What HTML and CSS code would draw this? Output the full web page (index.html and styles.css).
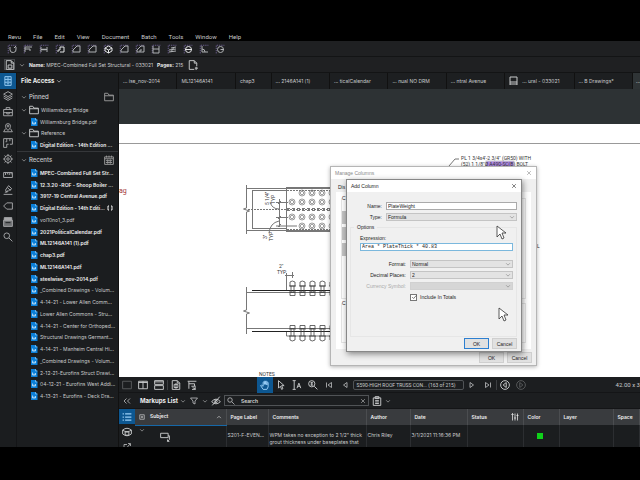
FILE: index.html
```
<!DOCTYPE html>
<html lang="en">
<head>
<meta charset="utf-8">
<title>Revu</title>
<link rel="stylesheet" href="styles.css">
</head>
<body>
<svg class="sprite" aria-hidden="true">
  <symbol id="frame" viewBox="0 0 16 16"><path d="M2 15V2h13" stroke="#75669c" stroke-dasharray="2 1.5" stroke-width="1.4"/></symbol>
  <symbol id="down" viewBox="0 0 16 16"><path d="M3 6l5 5 5-5"/></symbol>
  <symbol id="up" viewBox="0 0 16 16"><path d="M3 11l5-5 5 5"/></symbol>
  <symbol id="close" viewBox="0 0 16 16"><path d="M3 3l10 10M13 3L3 13"/></symbol>
  <symbol id="folder" viewBox="0 0 16 16"><path d="M1 14V2h5l2 3h7v9zM1 6h14"/></symbol>
  <symbol id="calendar" viewBox="0 0 16 16"><path d="M1 3h14v12H1zM1 6h14M4 1v3M8 1v3M12 1v3M3 9h10M3 12h10M6 7v7M10 7v7"/></symbol>
  <symbol id="pdf" viewBox="0 0 16 16"><path d="M2 0h9l4 4v12H2z" fill="#0b7fd8" stroke="none"/><path d="M11 0v4h4" stroke="#bfe0fa"/><path d="M5 7v5h3M8 12V9M11 8v4h-3" stroke="#d8edfc" stroke-width="1.5"/></symbol>
  <symbol id="search" viewBox="0 0 16 16"><circle cx="6" cy="6" r="4.5"/><path d="M9.5 9.5L15 15"/></symbol>
  <symbol id="cabinet" viewBox="0 0 16 16"><path d="M3 1h10v14H3zM3 5.500h10M3 10h10M6 3.300h4M6 8h4M6 12.500h4"/></symbol>
  <symbol id="layers" viewBox="0 0 16 16"><path d="M8 1l7 4-7 4-7-4zM1 8l7 4 7-4M1 11l7 4 7-4"/></symbol>
  <symbol id="case" viewBox="0 0 16 16"><path d="M1 4h14v10H1zM5 4V1h6v3M1 9h14M6 8v3h4V8"/></symbol>
  <symbol id="pin" viewBox="0 0 16 16"><path d="M8 12C4 8 4 6 4 5a4 4 0 018 0c0 1 0 3-4 7z"/><circle cx="8" cy="5" r="1.400"/><path d="M4 9l-3 5h14l-3-5"/></symbol>
  <symbol id="plan" viewBox="0 0 16 16"><path d="M1 1h14v9h-4M1 1v14h5v-5h3M6 1v5H4M11 1v4"/></symbol>
  <symbol id="gear" viewBox="0 0 16 16"><circle cx="8" cy="8" r="5.500"/><circle cx="8" cy="8" r="2"/><path d="M8 0v3M8 13v3M0 8h3M13 8h3M2.500 2.500l2 2M11.500 11.500l2 2M2.500 13.500l2-2M11.500 4.500l2-2"/></symbol>
  <symbol id="ruler" viewBox="0 0 16 16"><path d="M1 4h14v8H1zM4 4v4M7 4v3M10 4v4M13 4v3"/></symbol>
  <symbol id="sign" viewBox="0 0 16 16"><path d="M1 15h14M3 12l5-3M7 4l5 5M9 1l5 5-5 3-3 3-2-4z"/></symbol>
  <symbol id="tag" viewBox="0 0 16 16"><path d="M6 3h9v10H6L1 8z"/></symbol>
  <symbol id="sets" viewBox="0 0 16 16"><path d="M2 1h12v4H2z" fill="currentColor"/><path d="M1 5h14v10H1z" fill="currentColor" fill-opacity=".6"/><path d="M4 9h8" stroke="#1c1f21"/></symbol>
  <symbol id="doc" viewBox="0 0 16 16"><path d="M2 1h8l4 4v10H2zM10 1v4h4M5 8h6v5H5z"/></symbol>
  <symbol id="page" viewBox="0 0 16 16"><path d="M10 15H2V1h8l4 4v5M10 1v4h4M13 11v5M11 13h5"/></symbol>
  <symbol id="one" viewBox="0 0 16 16"><path d="M1 2h14v12H1z"/></symbol>
  <symbol id="cols" viewBox="0 0 16 16"><path d="M1 2h14v12H1zM8 2v12M1 4h14"/></symbol>
  <symbol id="rows" viewBox="0 0 16 16"><path d="M1 1h14v6H1zM1 9h14v6H1zM1 3h14"/></symbol>
  <symbol id="pagefit" viewBox="0 0 16 16"><path d="M2 1h8l4 4v10H2zM10 1v4h4M5 7h6M5 7v5h6V7M8 5v9"/></symbol>
  <symbol id="dims" viewBox="0 0 16 16"><path d="M1 2h14M3 2v12M3 6h9v4H7M9 12l5 3M13 9v6H8"/></symbol>
  <symbol id="hand" viewBox="0 0 16 16"><path d="M5 15L1 9l1-1 3 2V3.500q1-1 2 0V7 2q1-1 2 0v5-4.500q1-1 2 0V8 4q1-1 2 0v7l-2 4z"/></symbol>
  <symbol id="arrow" viewBox="0 0 16 16"><path d="M4 1v12l3-3 2 5 2-1-2-5h4z"/></symbol>
  <symbol id="textsel" viewBox="0 0 16 16"><path d="M1 1h5M3.500 1v14M1 15h5M8 13l3-8 3 8M9 10h4"/></symbol>
  <symbol id="zoomin" viewBox="0 0 16 16"><circle cx="6" cy="6" r="5"/><path d="M10 10l5 5M6 3v6M4 4.500h4M4 8h4"/></symbol>
  <symbol id="first" viewBox="0 0 16 16"><path d="M3 3v10M13 3L6 8l7 5z"/></symbol>
  <symbol id="prev" viewBox="0 0 16 16"><path d="M12 3L5 8l7 5z"/></symbol>
  <symbol id="next" viewBox="0 0 16 16"><path d="M4 3l7 5-7 5z"/></symbol>
  <symbol id="last" viewBox="0 0 16 16"><path d="M13 3v10M3 3l7 5-7 5z"/></symbol>
  <symbol id="back" viewBox="0 0 16 16"><circle cx="8" cy="8" r="7"/><path d="M10 4L5 8l5 4z"/></symbol>
  <symbol id="fwd" viewBox="0 0 16 16"><circle cx="8" cy="8" r="7"/><path d="M6 4l5 4-5 4z"/></symbol>
  <symbol id="collapse" viewBox="0 0 16 16"><path d="M7 3L2 8l5 5M14 3L9 8l5 5"/></symbol>
  <symbol id="funnel" viewBox="0 0 16 16"><path d="M1 2h14l-5 6v6l-4-2V8z"/></symbol>
  <symbol id="hide" viewBox="0 0 16 16"><path d="M1 9q7-8 14 0-7 7-14 0zM14 1L2 15"/><circle cx="8" cy="8.500" r="2"/></symbol>
  <symbol id="clip" viewBox="0 0 16 16"><path d="M2 3h12v12H2zM5 1h6v3H5zM5 7h6M5 9.500h6M5 12h6"/></symbol>
  <symbol id="list" viewBox="0 0 16 16"><path d="M1 3h2M5 3h10M1 8h2M5 8h10M1 13h2M5 13h10" stroke-width="2"/></symbol>
  <symbol id="globe" viewBox="0 0 16 16"><path d="M1 5q7-6 14 0v6q-7 6-14 0zM1 5q7 5 14 0M5 8v5h6V8z"/></symbol>
  <symbol id="export" viewBox="0 0 16 16"><path d="M8 3H2v12h12V9M8 9l6-7M10 1h5v5"/></symbol>
  <symbol id="sliders" viewBox="0 0 16 16"><path d="M3 15V1M1 4l2-3 2 3M8 1v14M6 10h4M13 15V1M11 5h4"/></symbol>
  <symbol id="plusbox" viewBox="0 0 16 16"><path d="M2 2h12v12H2zM8 5v6M5 8h6"/></symbol>
  <symbol id="callout" viewBox="0 0 16 16"><path d="M1 2h12v7H1zM13 6h2v6l-3 3M12 12v3h3"/></symbol>
  <symbol id="tick" viewBox="0 0 16 16"><path d="M3 8l4 4 7-8"/></symbol>
  <symbol id="pointer" viewBox="0 0 10 15"><path d="M1 1v11l3-3 2 5 2-1-2-5h4z" fill="#fff" stroke="#333" stroke-width=".8"/></symbol>
  <symbol id="bolt" viewBox="-4 -4 8 8"><circle r="3"/><circle r="1.700"/></symbol>
</svg>

<nav class="menu" aria-label="Main menu">
  <a href="#">Revu</a><a href="#">File</a><a href="#">Edit</a><a href="#">View</a><a href="#">Document</a><a href="#">Batch</a><a href="#">Tools</a><a href="#">Window</a><a href="#">Help</a>
</nav>

<div class="tools" role="toolbar" aria-label="Measure">
  <button aria-label="Calibrate"><svg class="ico"><use href="#frame"/><path d="M3 3v3a3 3 0 006-1V3M7 4l2-2"/></svg></button>
  <button aria-label="Scale"><svg class="ico"><use href="#frame"/><path d="M2 8V3h7M2 5h5v2"/></svg></button>
  <button aria-label="Length"><svg class="ico"><use href="#frame"/><path d="M2 3v5M8 3v5M2 5.500h6M4 4.500v2M6 4.500v2"/></svg></button>
  <button aria-label="Polylength"><svg class="ico bold"><use href="#frame"/><path d="M3 8V6h2V3h4v5H5"/></svg></button>
  <button aria-label="Area"><svg class="ico"><use href="#frame"/><path d="M2 8V6l4-4h3v6z"/></svg></button>
  <button aria-label="Perimeter"><svg class="ico"><use href="#frame"/><path d="M2 8V6l4-4h3v6z"/></svg></button>
  <button aria-label="Volume"><svg class="ico bold"><use href="#frame"/><path d="M5.500 2L9 4v3L5.500 9 2 7V4zM2 4l3.500 2L9 4M5.500 6v3"/></svg></button>
  <button aria-label="Polygon"><svg class="ico"><use href="#frame"/><path d="M2 8V6l4-4h3v6z"/></svg></button>
  <button aria-label="Cutout"><svg class="ico"><use href="#frame"/><path d="M2 8V6l4-4h3v6zM5 8V6h2"/></svg></button>
  <button aria-label="Width"><svg class="ico"><use href="#frame"/><path d="M2 2v7h6V2M2 5h6"/></svg></button>
  <button aria-label="Slope"><svg class="ico"><use href="#frame"/><path d="M2 8l7-1M2 6l7-1M4 4l5-1M4 8l3-5"/></svg></button>
  <button aria-label="Diameter"><svg class="ico bold"><use href="#frame"/><circle cx="5.500" cy="5.500" r="3"/><path d="M2 5.500h7"/></svg></button>
  <button aria-label="Angle"><svg class="ico"><use href="#frame"/><path d="M3 2v6h6M3 5q3 0 3 3"/></svg></button>
  <button aria-label="Radius"><svg class="ico"><use href="#frame"/><circle cx="5.500" cy="5.500" r="3"/><path d="M5.500 5.500H9"/></svg></button>
</div>

<div class="docbar">
  <button class="doc-button" aria-label="Document"><svg class="ico"><use href="#doc"/></svg></button>
  <svg class="tiny"><use href="#down"/></svg>
  <p><b>Name:</b> MPEC-Combined Full Set Structural - 033021</p>
  <p><b>Pages:</b> 215</p>
  <button class="page-button" aria-label="Page setup"><svg class="ico"><use href="#page"/></svg></button>
</div>

<div class="workspace">
  <nav class="rail" aria-label="Panels">
    <button class="on" aria-label="File Access"><svg class="ico"><use href="#cabinet"/></svg></button>
    <button aria-label="Layers"><svg class="ico"><use href="#layers"/></svg></button>
    <button aria-label="Tool Chest"><svg class="ico"><use href="#case"/></svg></button>
    <button aria-label="Places"><svg class="ico"><use href="#pin"/></svg></button>
    <button aria-label="Spaces"><svg class="ico"><use href="#plan"/></svg></button>
    <button aria-label="Properties"><svg class="ico"><use href="#gear"/></svg></button>
    <button aria-label="Measurements"><svg class="ico"><use href="#ruler"/></svg></button>
    <button aria-label="Signatures"><svg class="ico"><use href="#sign"/></svg></button>
    <button aria-label="Flags"><svg class="ico"><use href="#tag"/></svg></button>
    <button aria-label="Sets"><svg class="ico"><use href="#sets"/></svg></button>
    <button aria-label="Search"><svg class="ico"><use href="#search"/></svg></button>
  </nav>

  <aside class="files">
    <h2>File Access <svg class="tiny"><use href="#down"/></svg></h2>
    <h3><svg class="tiny"><use href="#down"/></svg>Pinned<svg class="ico side"><use href="#folder"/></svg></h3>
    <ul class="pinned">
      <li class="group"><svg class="tiny"><use href="#down"/></svg><svg class="ico"><use href="#folder"/></svg>Williamsburg Bridge</li>
      <li><svg class="file"><use href="#pdf"/></svg>Williamsburg Bridge.pdf</li>
      <li class="group"><svg class="tiny"><use href="#down"/></svg><svg class="ico"><use href="#folder"/></svg>Reference</li>
      <li class="open"><svg class="file"><use href="#pdf"/></svg>Digital Edition - 14th Edition ...</li>
    </ul>
    <h3><svg class="tiny"><use href="#down"/></svg>Recents<svg class="ico side"><use href="#calendar"/></svg></h3>
    <ul class="recents">
      <li class="open"><svg class="file"><use href="#pdf"/></svg>MPEC-Combined Full Set Str...</li>
      <li class="open"><svg class="file"><use href="#pdf"/></svg>12.3.20 -ROF - Shoop Boiler ...</li>
      <li class="open"><svg class="file"><use href="#pdf"/></svg>3917-19 Central Avenue.pdf</li>
      <li class="open"><svg class="file"><use href="#pdf"/></svg>Digital Edition - 14th Editi...<svg class="tiny"><path d="M2 1H1v4h1M4 1h1v4H4"/></svg></li>
      <li><svg class="file"><use href="#pdf"/></svg>vol10no1_3.pdf</li>
      <li class="open"><svg class="file"><use href="#pdf"/></svg>2021PoliticalCalendar.pdf</li>
      <li class="open"><svg class="file"><use href="#pdf"/></svg>ML12146A141 (1).pdf</li>
      <li class="open"><svg class="file"><use href="#pdf"/></svg>chap3.pdf</li>
      <li class="open"><svg class="file"><use href="#pdf"/></svg>ML12146A141.pdf</li>
      <li class="open"><svg class="file"><use href="#pdf"/></svg>steelwise_nov-2014.pdf</li>
      <li><svg class="file"><use href="#pdf"/></svg>_Combined Drawings - Volum...</li>
      <li><svg class="file"><use href="#pdf"/></svg>4-14-21 - Lower Allen Comm...</li>
      <li><svg class="file"><use href="#pdf"/></svg>Lower Allen Commons - Stru...</li>
      <li><svg class="file"><use href="#pdf"/></svg>4-14-21 - Center for Orthoped...</li>
      <li><svg class="file"><use href="#pdf"/></svg>Structural Drawings Germant...</li>
      <li><svg class="file"><use href="#pdf"/></svg>4-14-21 - Manheim Central Hi...</li>
      <li><svg class="file"><use href="#pdf"/></svg>_Combined Drawings - Volum...</li>
      <li><svg class="file"><use href="#pdf"/></svg>2-12-21-Eurofins Struct Drawi...</li>
      <li><svg class="file"><use href="#pdf"/></svg>04-12-21 - Eurofins West Addi...</li>
      <li><svg class="file"><use href="#pdf"/></svg>4-13-21 - Eurofins - Deck Dra...</li>
    </ul>
  </aside>

  <main class="main">
    <nav class="tabs" aria-label="Open documents">
      <a href="#">... ise_nov-2014</a><a href="#">ML12146A141</a><a href="#" class="short">chap3</a><a href="#">... 2146A141 (1)</a><a href="#">... ticalCalendar</a><a href="#">... nual NO DRM</a><a href="#">... ntral Avenue</a><a href="#" class="long"><svg class="ico"><path d="M1 9V1h7v8M1 6h7M1 8h7"/></svg>... ural - 033021</a><a href="#">... B Drawings*</a><a href="#" class="current">...</a>
    </nav>

    <section class="stage">
      <svg class="drawing" role="img" aria-label="Roof truss connection detail">
        <g transform="translate(-119 -124)">
          <path d="M119 143.500H2000" stroke="#999"/>
          <text x="119" y="193" class="red">ag</text>
          <g class="line">
            <path d="M246.500 185v23l-3 1 6 2-3 1v22M246 188.500h90M252 190.500h35M252.500 190v39M252 228.500h35M246 230.500h90"/>
            <path d="M286.500 187.500h50M286.500 187v45M286.500 231.500h50"/>
            <path d="M287 190.500h50M287 229.500h50M248 209.500h90" stroke-dasharray="2 1"/>
            <path d="M287 208.500h50M287 210.500h50" stroke-dasharray="3 2"/>
            <path d="M279.500 199v28M276 202.500h12M276 217.500h12M276 226h21M278 204l3-3M278 219l3-3M278 227l3-3M279 209q-7 0-9-7M279 221q-9 2-10 12"/>
          </g>
          <g class="circles">
            <use href="#bolt" x="298" y="189" width="8" height="8"/><use href="#bolt" x="308" y="189" width="8" height="8"/><use href="#bolt" x="318" y="189" width="8" height="8"/><use href="#bolt" x="328" y="189" width="8" height="8"/>
            <use href="#bolt" x="288" y="198" width="8" height="8"/><use href="#bolt" x="298" y="198" width="8" height="8"/><use href="#bolt" x="308" y="198" width="8" height="8"/><use href="#bolt" x="318" y="198" width="8" height="8"/><use href="#bolt" x="328" y="198" width="8" height="8"/>
            <use href="#bolt" x="288" y="213" width="8" height="8"/><use href="#bolt" x="298" y="213" width="8" height="8"/><use href="#bolt" x="308" y="213" width="8" height="8"/><use href="#bolt" x="318" y="213" width="8" height="8"/><use href="#bolt" x="328" y="213" width="8" height="8"/>
            <use href="#bolt" x="298" y="222" width="8" height="8"/><use href="#bolt" x="308" y="222" width="8" height="8"/><use href="#bolt" x="318" y="222" width="8" height="8"/><use href="#bolt" x="328" y="222" width="8" height="8"/>
          </g>
          <text class="note" transform="translate(269 205) rotate(-90)">5 1/4"</text>
          <text class="note" transform="translate(275 204) rotate(-90)">TYP</text>
          <text class="note" transform="translate(267 239) rotate(-90)">3"</text>
          <text class="note" transform="translate(273 241) rotate(-90)">TYP</text>
          <text class="note" x="279" y="268">2"</text>
          <text class="note" x="277" y="274">TYP</text>
          <g class="line">
            <path d="M246.500 287v23l-3 1 6 2-3 1v20M246 292.500h90M246 328.500h90M286.500 273v18M292.500 272v6M285 275.500h9M286.500 332v4h50"/>
            <path d="M252 290.500h84M252 331.500h84" stroke="#222"/>
          </g>
          <g class="studs">
            <path id="stud" d="M290 282q2-2 5 0v4h-5zM289 286h7M291 286v6M294 286v6M289 292h7M290 292.500h5v3h-5zM290 325.500h5v3h-5zM289 329h7M291 329v7M294 329v7M289 336h7M290 336v4q2 2 5 0v-4"/>
            <use href="#stud" x="10"/><use href="#stud" x="20"/><use href="#stud" x="30"/><use href="#stud" x="40"/>
          </g>
          <text class="note notes" x="259" y="376">NOTES</text>
          <rect x="486" y="161" width="28" height="6" fill="#b08ae6"/>
          <path class="line" d="M449 166l6-7h4"/>
          <text class="note" x="461" y="160">PL 1 3/4x4'-2 3/4" (GR50) WITH</text>
          <text class="note" x="461" y="166">(52) 1 1/8"Ø A490-SC(B) BOLT</text>
          <text class="note" x="537" y="248">L</text>
        </g>
      </svg>

      <section class="dialog manage" aria-label="Manage Columns">
        <header><h2>Manage Columns</h2><button aria-label="Close"><svg class="tiny"><use href="#close"/></svg></button></header>
        <p class="tab-name">Dis</p>
        <div class="sheet">
          <div class="box"><span>C</span><i></i><i></i><i></i></div>
          <div class="box"><span>C</span></div>
        </div>
        <footer><button>OK</button><button>Cancel</button></footer>
      </section>

      <form class="dialog add" aria-label="Add Column">
        <header><h2>Add Column</h2><button type="button" aria-label="Close"><svg class="tiny"><use href="#close"/></svg></button></header>
        <div class="pair"><label for="name">Name:</label><input id="name" value="PlateWeight"></div>
        <div class="pair"><label for="type">Type:</label><span class="drop"><select id="type"><option>Formula</option></select><svg class="tiny"><use href="#down"/></svg></span></div>
        <fieldset>
          <legend>Options</legend>
          <label for="expr" class="above">Expression:</label>
          <input id="expr" class="code" value="Area * PlateThick * 40.83">
          <div class="pair"><label for="format">Format:</label><span class="drop"><select id="format"><option>Normal</option></select><svg class="tiny"><use href="#down"/></svg></span></div>
          <div class="pair"><label for="places">Decimal Places:</label><span class="drop"><select id="places"><option>2</option></select><svg class="tiny"><use href="#down"/></svg></span></div>
          <div class="pair off"><label for="symbol">Currency Symbol:</label><span class="drop"><select id="symbol" disabled><option></option></select><svg class="tiny"><use href="#down"/></svg></span></div>
          <div class="check"><span class="tickbox"><input type="checkbox" id="totals" checked><svg class="tiny"><use href="#tick"/></svg></span><label for="totals">Include In Totals</label></div>
        </fieldset>
        <footer><button type="button" class="default">OK</button><button type="button">Cancel</button></footer>
      </form>
      <svg class="cursor first"><use href="#pointer"/></svg>
      <svg class="cursor second"><use href="#pointer"/></svg>
    </section>

    <div class="pager" role="toolbar" aria-label="Navigation">
      <button class="dim" aria-label="Single page"><svg class="ico"><use href="#one"/></svg></button>
      <button aria-label="Split vertical"><svg class="ico"><use href="#cols"/></svg></button>
      <button aria-label="Split horizontal"><svg class="ico"><use href="#rows"/></svg></button>
      <span class="rule"></span>
      <button aria-label="Fit page"><svg class="ico"><use href="#pagefit"/></svg></button>
      <button aria-label="Dimmer"><svg class="ico"><use href="#dims"/></svg></button>
      <span class="spring"></span>
      <button class="on" aria-label="Pan"><svg class="ico"><use href="#hand"/></svg></button>
      <button aria-label="Select"><svg class="ico"><use href="#arrow"/></svg></button>
      <button aria-label="Select text"><svg class="ico"><use href="#textsel"/></svg></button>
      <button aria-label="Zoom"><svg class="ico"><use href="#zoomin"/></svg></button>
      <button aria-label="First page"><svg class="step"><use href="#first"/></svg></button>
      <button aria-label="Previous page"><svg class="step"><use href="#prev"/></svg></button>
      <input aria-label="Page" value="S590-HIGH ROOF TRUSS CON... (163 of 215)">
      <button aria-label="Next page"><svg class="step"><use href="#next"/></svg></button>
      <button aria-label="Last page"><svg class="step"><use href="#last"/></svg></button>
      <span class="rule"></span>
      <button aria-label="Previous view"><svg class="ico"><use href="#back"/></svg></button>
      <button class="dim" aria-label="Next view"><svg class="ico"><use href="#fwd"/></svg></button>
      <span class="spring wide"></span>
      <span class="size">42.00 x 3</span>
    </div>

    <div class="markbar">
      <button aria-label="Collapse"><svg class="step"><use href="#collapse"/></svg></button>
      <h2>Markups List</h2><svg class="tiny"><use href="#down"/></svg>
      <button aria-label="Filter"><svg class="step"><use href="#funnel"/></svg></button>
      <svg class="tiny"><use href="#down"/></svg>
      <button aria-label="Hide markups"><svg class="ico"><use href="#hide"/></svg></button>
      <div class="find"><svg class="step"><use href="#search"/></svg><input aria-label="Search markups" placeholder="Search"><svg class="tiny"><use href="#close"/></svg></div>
      <button aria-label="Summary"><svg class="ico"><use href="#clip"/></svg></button>
      <svg class="tiny"><use href="#down"/></svg>
    </div>

    <div class="markups">
      <nav class="mark-rail" aria-label="Markup views">
        <button class="on" aria-label="List"><svg class="ico"><use href="#list"/></svg></button>
        <button aria-label="Model"><svg class="ico"><use href="#globe"/></svg></button>
        <button aria-label="Export"><svg class="step"><use href="#export"/></svg></button>
      </nav>
      <div class="table-wrap">
        <table>
          <colgroup><col class="c-subject"><col class="c-page"><col class="c-comments"><col class="c-author"><col class="c-date"><col class="c-status"><col class="c-color"><col class="c-layer"><col></colgroup>
          <thead><tr>
            <th class="sorted"><span class="head"><svg class="tiny"><use href="#plusbox"/></svg>Subject<svg class="tiny end"><use href="#up"/></svg></span></th>
            <th>Page Label</th><th>Comments</th><th>Author</th><th>Date</th>
            <th><span class="head">Status<svg class="step end"><use href="#sliders"/></svg></span></th>
            <th>Color</th><th>Layer</th><th>Space</th>
          </tr></thead>
          <tbody><tr>
            <td><span class="subject"><svg class="tiny"><use href="#down"/></svg><svg class="ico"><use href="#callout"/></svg></span></td>
            <td>S201-F-EVEN...</td>
            <td>WPM takes no exception to 2 1/2" thick<br>grout thickness under baseplates that</td>
            <td>Chris Riley</td><td>3/1/2021 11:16:36 PM</td><td></td>
            <td><span class="swatch"></span></td><td></td><td></td>
          </tr></tbody>
        </table>
      </div>
    </div>
  </main>
</div>
</body>
</html>
```
FILE: styles.css
```
* { box-sizing: border-box; margin: 0; padding: 0; }

body {
  height: 100vh;
  padding: 32px 0 33px;
  display: flex;
  flex-direction: column;
  overflow: hidden;
  background: #000;
  color: #c9cbcc;
  font: 5px/8px Inter, Roboto, sans-serif;
}

.sprite { position: absolute; width: 0; height: 0; }
svg { display: block; flex: none; fill: none; stroke: currentColor; }
.ico { width: 10px; height: 10px; }
.ico use, .tiny use, .step use { stroke-width: 1.5px; }
.step { width: 8px; height: 8px; }
.tiny { width: 6px; height: 6px; }
.file { width: 8px; height: 8px; }

a { color: inherit; text-decoration: none; }
ul { list-style: none; }
h2, h3 { font-size: 6px; line-height: 8px; }
button, input, select { font: inherit; color: inherit; background: none; border: 0; border-radius: 0; outline: 0; min-width: 0; }
button { display: flex; align-items: center; justify-content: center; }
.on { background: #0d5791; color: #9bd0f8; }
.dim { opacity: .35; }

.menu {
  display: flex;
  gap: 12px;
  flex: none;
  height: 9px;
  padding-left: 8px;
  font: 6px/9px Roboto, sans-serif;
}

.tools {
  display: flex;
  flex: none;
  height: 16px;
  padding-left: 4px;
  background: #1f2022;
  border-bottom: 1px solid #131415;
}
.tools button { width: 16px; color: #aeb0b3; }
.tools .bold { color: #e4e5e6; }

.docbar {
  display: flex;
  align-items: center;
  gap: 4px;
  flex: none;
  height: 16px;
  padding-left: 4px;
  background: #1f2022;
  border-bottom: 1px solid #131415;
}
.docbar b { color: #eee; }
.docbar button { height: 11px; width: 11px; border: 1px solid #45474a; }
.docbar .page-button { border: 0; }

.workspace {
  flex: 1;
  min-height: 0;
  display: grid;
  grid-template-columns: 16px 103px minmax(0, 1fr);
  background: #1b1d1f;
}

.rail {
  display: grid;
  grid-auto-rows: 1fr;
  height: 172px;
}
.rail button { color: #a6a8aa; }
.rail .on { color: #9bd0f8; }

.files { border-left: 1px solid #141517; border-right: 1px solid #111; }
.files h2 { display: flex; align-items: center; gap: 2px; height: 16px; padding-left: 4px; color: #f2f2f2; }
.files h3 { display: flex; align-items: center; gap: 2px; height: 15px; padding: 0 4px; font-weight: 500; }
.files .side { margin-left: auto; color: #999; }
.files li { display: flex; align-items: center; gap: 2px; padding-left: 13px; white-space: nowrap; }
.pinned { display: grid; grid-auto-rows: 1fr; height: 48px; border-bottom: 1px solid #35373a; }
.files .group { padding-left: 4px; }
.recents { display: grid; grid-auto-rows: 1fr; height: 235px; }
.files .open { font-weight: 600; color: #f0f0f0; }

.main { display: flex; flex-direction: column; min-width: 0; min-height: 0; }

.tabs { display: flex; flex: none; height: 16px; overflow: hidden; background: #1d1f21; }
.tabs a {
  display: flex;
  align-items: center;
  gap: 3px;
  flex: 0 1 59px;
  padding-left: 4px;
  border-right: 1px solid #111;
  white-space: nowrap;
}
.tabs .short { flex-basis: 36px; }
.tabs .long { flex-basis: 70px; }
.tabs .current { flex: 1 0 7px; padding-left: 3px; background: #2f3436; border: 0; overflow: hidden; }

.stage {
  position: relative;
  flex: 1;
  min-height: 0;
  padding-top: 35px;
  background: #2d3234;
}
.drawing { width: 100%; height: 100%; background: #fff; }
.line { stroke: #777; stroke-width: 1; }
.circles { stroke: #777; stroke-width: .7; }
.studs { stroke: #444; stroke-width: .8; }
.drawing text { stroke: none; fill: #333; font-family: Roboto, sans-serif; }
.drawing .note { font-size: 5px; }
.drawing .notes { text-decoration: underline; }
.drawing .red { font-size: 7px; fill: #a33636; }

.dialog {
  position: absolute;
  display: flex;
  flex-direction: column;
  background: #f0f0f0;
  color: #222;
  font: 5px/8px "Liberation Sans", sans-serif;
  border: 1px solid #b5b5b5;
  box-shadow: 0 1px 4px rgba(0, 0, 0, .3);
}
.dialog header { display: flex; justify-content: space-between; align-items: center; flex: none; height: 12px; padding: 0 4px; background: #fff; }
.dialog h2 { font-size: 5px; font-weight: 400; }
.dialog footer { display: flex; justify-content: flex-end; gap: 3px; margin-top: auto; padding: 1px 4px 2px; }
.dialog footer button { width: 25px; height: 11px; background: #e1e1e1; border: 1px solid #cfcfcf; }
.dialog footer .default { border-color: #2d7fd0; }

.manage { left: 211px; top: 77px; width: 207px; height: 200px; }
.manage header { color: #888; }
.manage .tab-name { padding: 4px 0 0 7px; }
.manage .sheet { flex: 1; display: grid; gap: 4px; grid-template-rows: 101px 1fr; margin: 1px 5px 2px; padding: 6px 5px; background: #fff; }
.manage .box { border: 1px solid #e6e6e6; }
.manage .box span { display: block; width: 4px; margin-top: -5px; background: #fff; }
.manage .box i { display: block; width: 14px; height: 13px; margin: 9px 0 -6px; background: #c4c4c4; }

.add { left: 227px; top: 90px; width: 176px; height: 173px; border-color: #888; box-shadow: 1px 2px 6px rgba(0, 0, 0, .45); }
.pair { display: grid; grid-template-columns: 35px minmax(0, 1fr); gap: 4px; text-align: right; padding-right: 4px; margin-bottom: 3px; white-space: nowrap; }
.add header { margin-bottom: 10px; }
.add input, .add select { width: 100%; height: 8px; padding: 0 1px; background: #fff; border: 1px solid #aaa; line-height: 6px; }
.drop { display: grid; grid-template-columns: minmax(0, 1fr) 8px; align-items: center; color: #222; text-align: left; }
.drop .tiny { grid-area: 1 / 2; z-index: 1; color: #777; pointer-events: none; }
.drop select { grid-area: 1 / 1 / 2 / 3; appearance: none; background: #e3e3e3; border-color: #c4c4c4; }
.pair.off { color: #aaa; }
.add .drop select { background: #e3e3e3; border-color: #c4c4c4; }
.add .off select:disabled { background: #ccc; }
fieldset { height: 115px; margin: -1px 4px 0 3px; padding: 3px 3px 0 9px; border: 1px solid #e6e6e6; }
legend { margin-left: -6px; padding: 0 3px; }
.above { display: block; }
.add .code { margin-bottom: 9px; border-color: #7bb8dd; font-family: "Liberation Mono", monospace; }
fieldset .pair { grid-template-columns: 46px minmax(0, 1fr); padding-right: 0; }
.check { display: flex; gap: 3px; align-items: center; padding-left: 50px; }
.tickbox { display: grid; place-items: center; width: 7px; height: 7px; }
.tickbox > * { grid-area: 1 / 1; pointer-events: none; }
.add .tickbox input { appearance: none; height: 7px; border-color: #777; pointer-events: auto; }

.cursor { position: absolute; width: 10px; height: 15px; }
.cursor.first { left: 377px; top: 136px; }
.cursor.second { left: 379px; top: 218px; }

.pager, .markbar { display: flex; align-items: center; flex: none; height: 16px; background: #1c1e20; border-bottom: 1px solid #141517; }
.pager button { flex: none; width: 16px; height: 16px; }
.pager .rule { flex: none; width: 1px; height: 10px; background: #3c3e41; }
.pager .spring { flex: 2; }
.pager .wide { flex: 3; }
.pager input { width: 111px; height: 10px; padding: 0 2px; border: 1px solid #505356; border-radius: 2px; font-family: Roboto, sans-serif; }
.pager .size { white-space: nowrap; font: 6px/8px Roboto, sans-serif; }

.markbar > button { width: 16px; }
.markbar h2 { margin: 0 2px 0 5px; color: #eee; white-space: nowrap; }
.find { display: flex; align-items: center; gap: 6px; width: 145px; height: 11px; padding: 0 2px; border: 1px solid #505356; }
.find input { flex: 1; }
.find input::placeholder { color: #d8d8d8; opacity: 1; font-weight: 600; }

.markups { display: grid; grid-template-columns: 16px minmax(0, 1fr); flex: none; height: 38px; overflow: hidden; background: #1b1d1f; }
.mark-rail button { width: 16px; height: 15px; }
.table-wrap { overflow: hidden; }
table { width: 100%; table-layout: fixed; border-collapse: collapse; line-height: 7px; }
.c-subject { width: 91px; } .c-page { width: 42px; } .c-comments { width: 98px; } .c-author { width: 44px; }
.c-date { width: 57px; } .c-status { width: 56px; } .c-color { width: 36px; } .c-layer { width: 54px; }
th { height: 16px; padding: 0 4px; background: #393b3e; border-right: 1px solid #4b4d50; color: #eee; font-weight: 600; text-align: left; white-space: nowrap; overflow: hidden; }
th.sorted { border-bottom: 1px solid #1668a8; }
.head { display: flex; align-items: center; gap: 5px; }
.end { margin-left: auto; }
td { height: 22px; padding: 7px 1px 0; vertical-align: top; border-right: 1px solid #2c2e31; white-space: nowrap; }
td:first-child { padding-top: 1px; }
.subject { display: flex; gap: 15px; padding-left: 3px; }
.subject .ico { margin-top: 5px; }
.swatch { display: block; width: 6px; height: 6px; margin: 1px 0 0 12px; background: #0fd01a; }
```
